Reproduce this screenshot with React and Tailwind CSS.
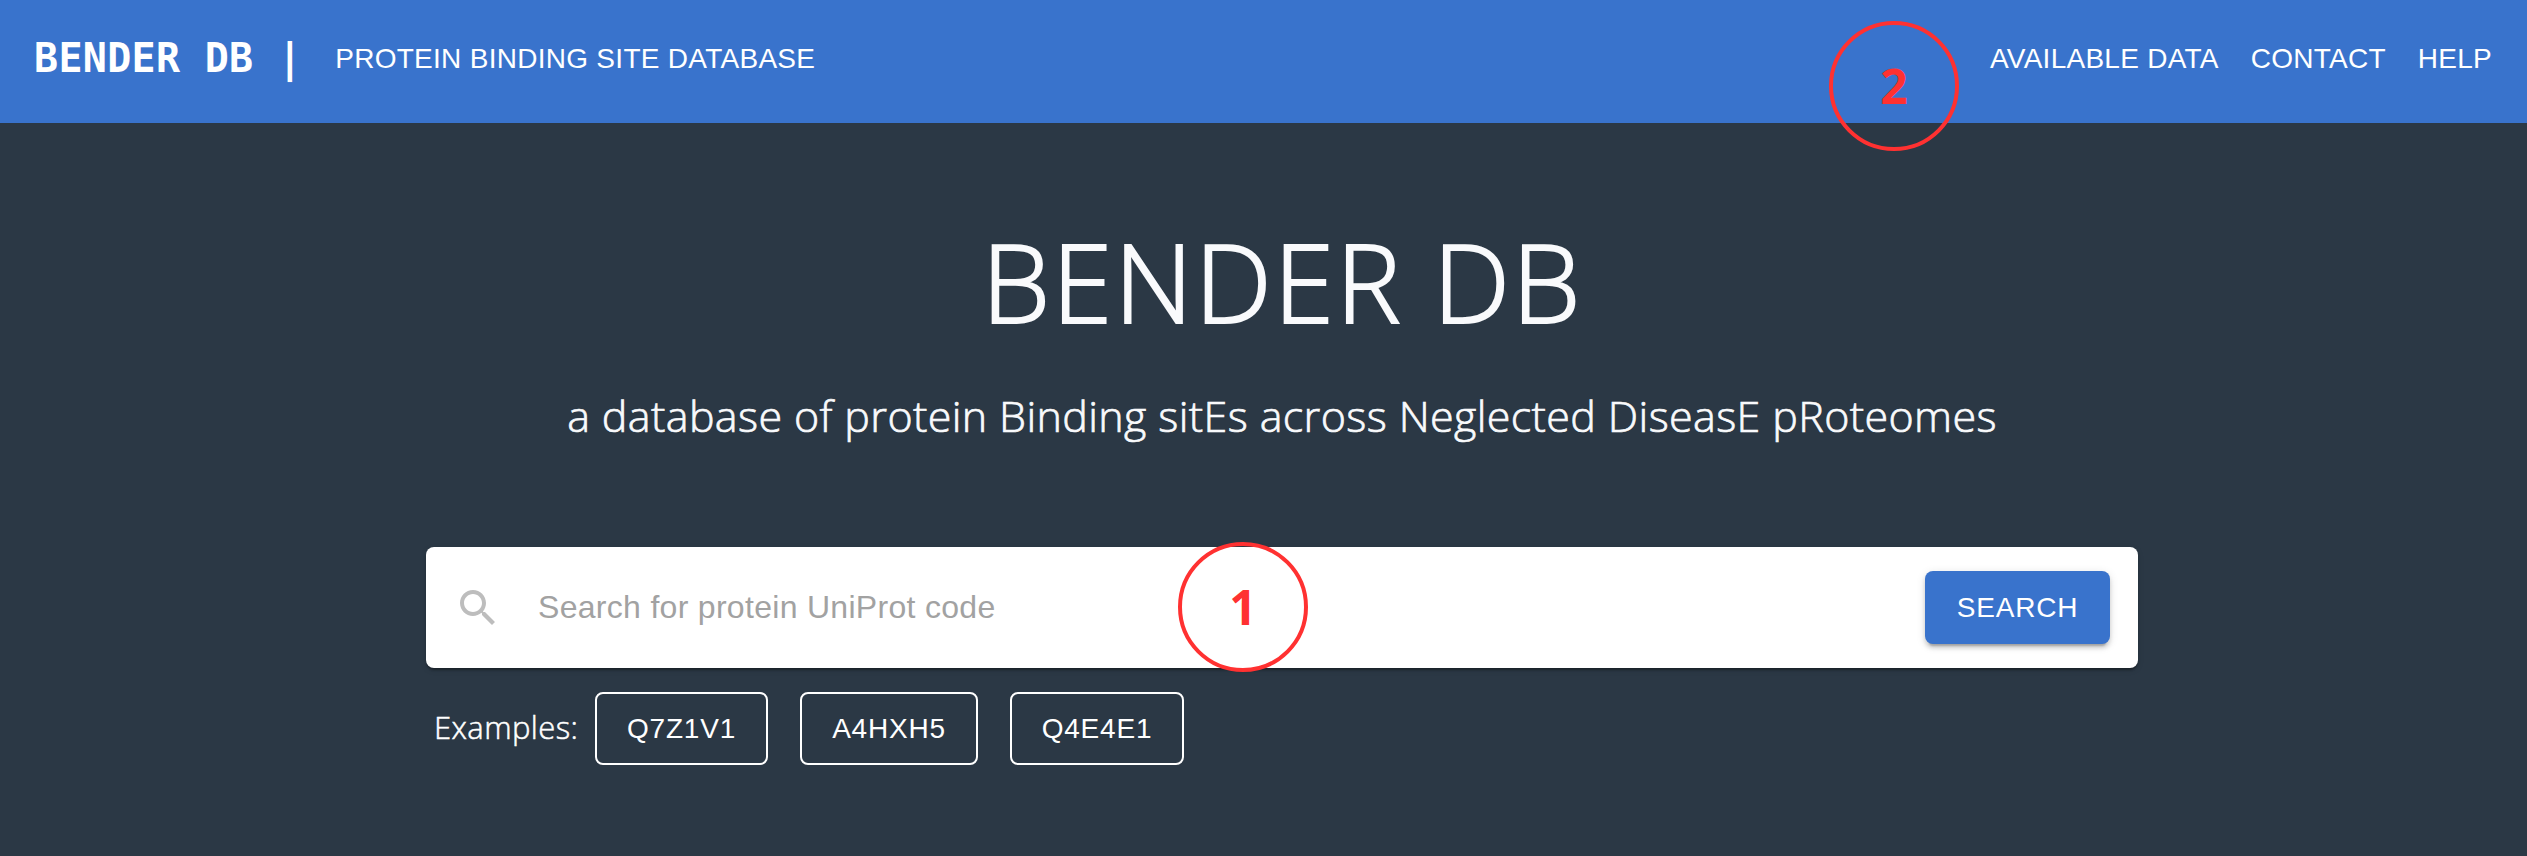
const examples = [
  { code: 'Q7Z1V1', width: 'w-[173px]' },
  { code: 'A4HXH5', width: 'w-[178px]' },
  { code: 'Q4E4E1', width: 'w-[174px]' },
];

function Marker({ label, className }) {
  return (
    <div
      className={`absolute flex size-[130px] items-center justify-center rounded-full border-4 border-[#ff3131] font-['Open_Sans',sans-serif] text-[48px] leading-none font-bold text-[#ff3131] ${className}`}
    >
      {label}
    </div>
  );
}

function Header() {
  return (
    <header className="flex h-[123px] items-start bg-[#3973cc] pt-[36px] pr-[35px] pl-[34px] text-[28px] leading-[44px] tracking-[0.26px] whitespace-pre text-white">
      <div className="font-['DejaVu_Sans_Mono',monospace] text-[40px] font-bold tracking-[0.3px]">BENDER DB |</div>
      <div className="mt-px ml-[33px] tracking-[0.28px]">PROTEIN BINDING SITE DATABASE</div>
      <nav className="mt-px ml-auto flex gap-8">
        <a>AVAILABLE DATA</a>
        <a>CONTACT</a>
        <a>HELP</a>
      </nav>
    </header>
  );
}

function SearchBar() {
  return (
    <div className="relative mt-[101px] flex h-[121px] items-center rounded-lg bg-white pr-7 pl-[28px] shadow-[0_4px_2px_-2px_rgba(0,0,0,0.2),0_2px_2px_rgba(0,0,0,0.14),0_2px_6px_rgba(0,0,0,0.12)]">
      <svg viewBox="0 0 24 24" className="size-12 fill-[#bdbdbd]">
        <path d="M15.5 14h-.79l-.28-.27C15.41 12.59 16 11.11 16 9.5 16 5.91 13.09 3 9.5 3S3 5.91 3 9.5 5.91 16 9.5 16c1.61 0 3.09-.59 4.23-1.57l.27.28v.79l5 4.99L20.49 19l-4.99-5zm-6 0C7.01 14 5 11.99 5 9.5S7.01 5 9.5 5 14 7.01 14 9.5 11.99 14 9.5 14z" />
      </svg>
      <div className="-mt-0.5 ml-[36px] text-[32px] tracking-[0.3px] text-[#a2a2a2]">Search for protein UniProt code</div>
      <button className="ml-auto h-[73px] w-[185px] rounded-lg bg-[#3973cc] text-[28px] tracking-[0.8px] text-white shadow-[0_6px_2px_-4px_rgba(0,0,0,0.2),0_4px_4px_rgba(0,0,0,0.14),0_2px_10px_rgba(0,0,0,0.12)]">
        SEARCH
      </button>
      <Marker label="1" className="top-[-5px] left-[752px]" />
    </div>
  );
}

export default function App() {
  return (
    <div className="relative h-[856px] w-[2527px] overflow-hidden bg-[#2b3845] font-['Liberation_Sans',sans-serif]">
      <Header />
      <main className="ml-[426px] w-[1712px]">
        <h1 className="mt-[98px] text-center font-['Open_Sans',sans-serif] text-[109px] leading-[120px] font-light tracking-[2px] whitespace-nowrap text-[#f9fafc] [-webkit-text-stroke:2px_#f9fafc]">
          BENDER DB
        </h1>
        <p className="mt-[45px] text-center font-['Open_Sans',sans-serif] text-[43px] leading-[60px] font-light tracking-[0.37px] whitespace-nowrap text-[#f9fafc] [-webkit-text-stroke:0.7px_#f9fafc]">
          a database of protein Binding sitEs across Neglected DiseasE pRoteomes
        </p>
        <SearchBar />
        <div className="mt-6 flex items-center gap-8 pl-[8px] text-white">
          <div className="-mt-0.5 -mr-4 w-[145px] font-['Open_Sans',sans-serif] text-[31px] font-light tracking-[0.4px] whitespace-nowrap [-webkit-text-stroke:0.5px_white]">Examples:</div>
          {examples.map(({ code, width }) => (
            <button key={code} className={`h-[73px] ${width} rounded-lg border-2 border-white text-[28px] tracking-[0.8px]`}>
              {code}
            </button>
          ))}
        </div>
      </main>
      <Marker label="2" className="top-[21px] left-[1829px]" />
    </div>
  );
}
